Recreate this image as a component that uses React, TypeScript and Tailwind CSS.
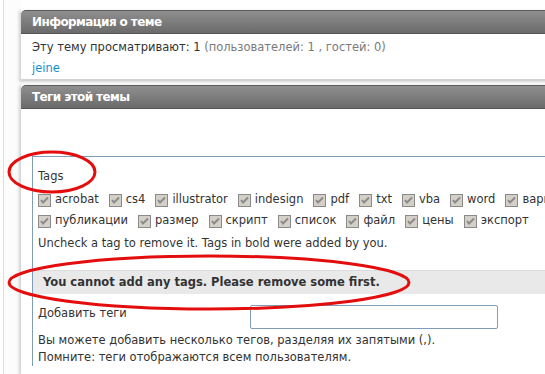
import React from "react";

const row1 = ["acrobat", "cs4", "illustrator", "indesign", "pdf", "txt", "vba", "word", "варианты"];
const row2 = ["публикации", "размер", "скрипт", "список", "файл", "цены", "экспорт"];

function Check() {
  return (
    <svg width="13" height="13" viewBox="0 0 13 13" className="shrink-0">
      <rect x="0.5" y="0.5" width="12" height="12" fill="#d4d0c8" stroke="#8a8a8a" />
      <path d="M3 6 L5 8.5 L10 3.5" fill="none" stroke="#8a8a8a" strokeWidth="2" />
    </svg>
  );
}

function TagRow({ tags }: { tags: string[] }) {
  return (
    <div className="flex h-[20px] items-center whitespace-nowrap">
      {tags.map((tag) => (
        <label key={tag} className="mr-[10px] flex items-center gap-[4px]">
          <Check />
          <span>{tag}</span>
        </label>
      ))}
    </div>
  );
}

function PanelHeader({ title }: { title: string }) {
  return (
    <div className="flex h-[24px] items-center rounded-tl-[5px] border-y border-t-[#5c5c5c] border-b-[#545454] bg-gradient-to-b from-[#8f8f8f] to-[#6b6b6b] pl-[11px] text-[12px] font-bold tracking-[-0.6px] text-white">
      {title}
    </div>
  );
}

export default function App() {
  return (
    <div
      className="relative flex h-[374px] w-[545px] overflow-hidden bg-white text-[11.5px] text-[#333]"
      style={{ fontFamily: '"DejaVu Sans", Verdana, sans-serif' }}
    >
      <div className="w-[3px] shrink-0" />
      <div className="w-px shrink-0 bg-[#dedede]" />
      <div className="w-[17px] shrink-0 bg-[#fcfcfc]" />

      <div className="flex w-[600px] shrink-0 flex-col">
        <section className="mt-[10px] shadow-[-2px_1px_3px_rgba(0,0,0,0.18)]">
          <PanelHeader title="Информация о теме" />
          <div className="flex h-[47px] flex-col border-b-2 border-[#d2d2d2] bg-white pl-[11px]">
            <p className="mt-[4px] leading-[18px]">
              Эту тему просматривают: 1{" "}
              <span className="text-[#7a7a7a]">(пользователей: 1 , гостей: 0)</span>
            </p>
            <p className="mt-[3px] leading-[18px] text-[#1391cf]">jeine</p>
          </div>
        </section>

        <section className="mt-[4px] flex-1 shadow-[-2px_1px_3px_rgba(0,0,0,0.18)]">
          <PanelHeader title="Теги этой темы" />
          <div className="bg-white pl-[11px] pt-[47px]">
            <div className="border-l border-t border-[#7f9db9] pl-[5px]">
              <p className="mt-[9px] leading-[20px]">Tags</p>
              <div className="mt-[4px]">
                <TagRow tags={row1} />
              </div>
              <div className="mt-[1px]">
                <TagRow tags={row2} />
              </div>
              <p className="mt-[2px] leading-[20px]">
                Uncheck a tag to remove it. Tags in bold were added by you.
              </p>

              <div className="-ml-[5px] mt-[17px] flex h-[24px] items-center border-t border-[#dcdcdc] bg-[#e9e9e9] pl-[10px] font-bold text-[#333]">
                You cannot add any tags. Please remove some first.
              </div>

              <div className="mt-[11px] flex items-start">
                <span className="w-[212px] leading-[16px]">Добавить теги</span>
                <input
                  type="text"
                  className="h-[24px] w-[248px] rounded-[2px] border border-[#7f9db9] bg-white outline-none"
                />
              </div>
              <p className="mt-[3px] leading-[17px]">
                Вы можете добавить несколько тегов, разделяя их запятыми (,).
              </p>
              <p className="leading-[17px]">Помните: теги отображаются всем пользователям.</p>
            </div>
          </div>
        </section>
      </div>

      <svg
        className="pointer-events-none absolute left-0 top-0"
        width="545"
        height="374"
        viewBox="0 0 545 374"
      >
        <ellipse cx="52" cy="172" rx="43" ry="20" fill="none" stroke="#e40d0d" strokeWidth="3" />
        <ellipse cx="209" cy="282.5" rx="200" ry="26.5" fill="none" stroke="#e40d0d" strokeWidth="3" />
      </svg>
    </div>
  );
}
